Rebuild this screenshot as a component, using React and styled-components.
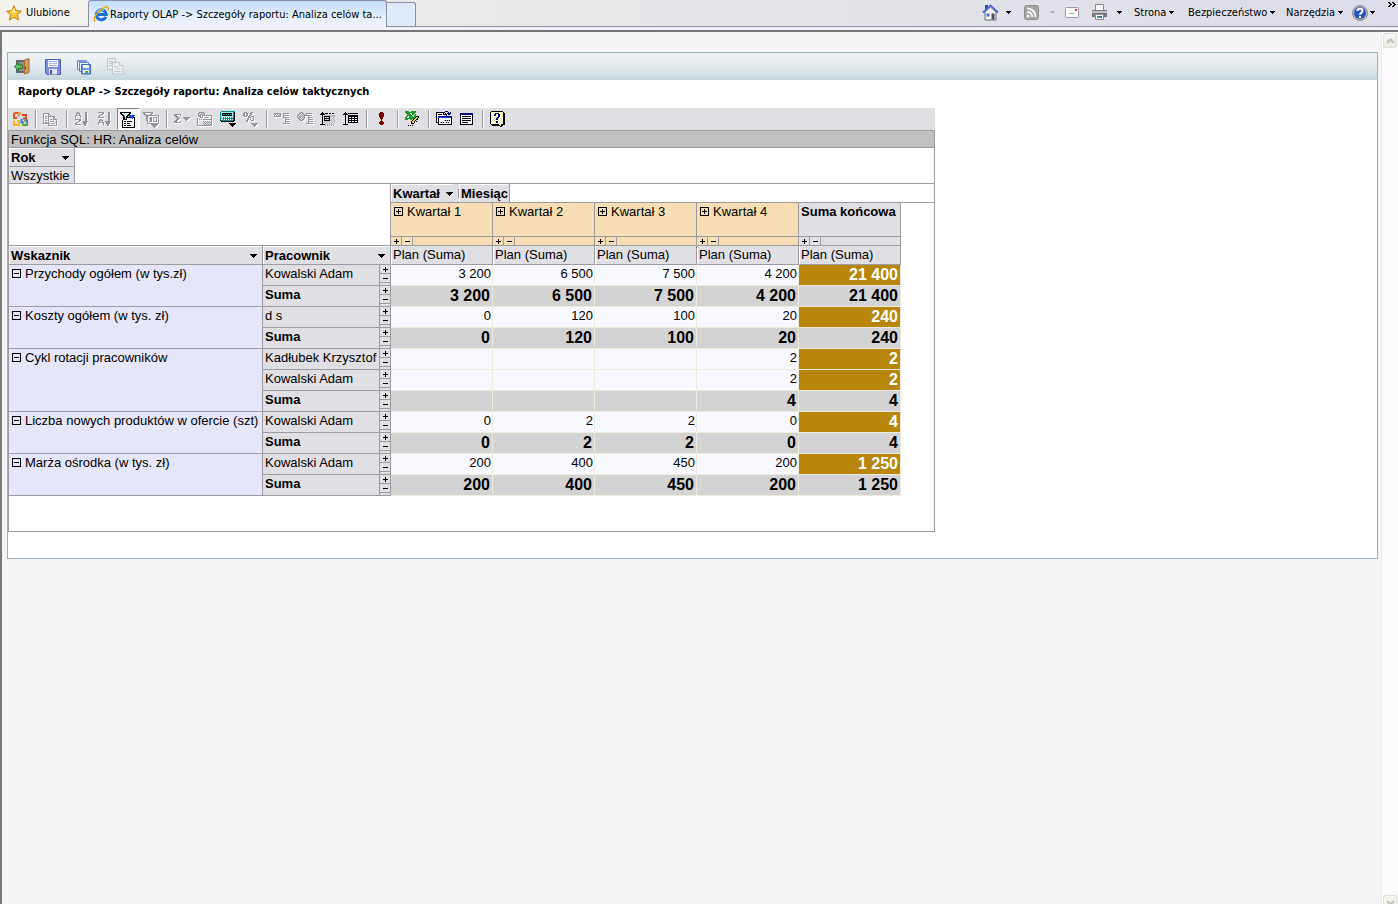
import React from "react";
import styled, { createGlobalStyle, css } from "styled-components";

const chromeFont = `Tahoma, "DejaVu Sans Condensed", "Noto Sans", sans-serif`;
const gridFont = `"Liberation Sans", Arial, sans-serif`;
const line = "#9c9ba1";
const face = "#e0dfe3";

const GlobalStyle = createGlobalStyle`
  * { box-sizing: border-box; }
  body { margin: 0; font-family: ${gridFont}; font-size: 13px; color: #000; background: #f4f4f4; }
  button { font: inherit; color: inherit; background: none; border: 0; padding: 0; margin: 0; }
  svg { display: block; flex: none; }
`;

/* ---------- icons ---------- */

const palette = {
  k: "#000000", g: "#94949c", w: "#ffffff", n: "#00007b", b: "#1c3cf0", c: "#9fe8ee",
  t: "#0b8f93", r: "#7b0000", e: "#1c9a2c", y: "#f0d820", l: "#fdf6b4", a: "#b4b4ba",
};

const toPath = (cells) => cells.map(([x, y]) => `M${x} ${y}h1v1h-1z`).join("");

function Pixels({ rows, disabled }) {
  const byColour = {};
  rows.forEach((row, y) =>
    [...row].forEach((ch, x) => {
      if (palette[ch]) (byColour[ch] = byColour[ch] || []).push([x, y]);
    })
  );
  return (
    <svg width="17" height="17" viewBox="0 0 17 17" shapeRendering="crispEdges" aria-hidden="true">
      {disabled && byColour.g && <path d={toPath(byColour.g)} fill="#fff" transform="translate(1 1)" />}
      {Object.entries(byColour).map(([ch, cells]) => (
        <path key={ch} d={toPath(cells)} fill={palette[ch]} />
      ))}
    </svg>
  );
}

const art = {
  copy: [
    "", "", "gggggg", "g....gg", "g....g.g", "g.gg.ggggggg", "g....g....gg", "g.gg.g....g.g",
    "g....g.gg.gggg", "g.gg.g.......g", "g....g.gggg..g", "g.gg.g.......g", "ggggggg.gggg.g",
    ".....g.......g", ".....ggggggggg",
  ],
  az: [
    "", "...gg......gg", "..gggg.....gg", "..g..g.....gg", ".gggggg....gg", ".g....g....gg", ".g....g....gg",
    "...........gg", ".gggggg....gg", ".....gg....gg", "....gg..gggggg", "..gg.....gggg", ".gg......gggg",
    ".gggggg...gg", "..........gg",
  ],
  za: [
    "", ".gggggg....gg", ".....gg....gg", "....gg.....gg", "..gg.......gg", ".gg........gg", ".gggggg....gg",
    "...........gg", "...gg......gg", "..gggg.....gg", "..g..g..gggggg", ".gggggg..gggg", ".g....g..gggg",
    ".g....g...gg", "..........gg",
  ],
  filter: [
    "", "kkkkkkkkkkk", "kkcwcwcwwkk", ".kkcwcwckk", "..kkcwckkbbbbbb", "...kkwkk.bbbbb.", "...kkckkkkkbbkk",
    "...kkckwwwwwbwk", "...kkkkwwwwwwwk", "..kwwwwwwwwwwwk", "..kwkkwkkkkkwwk", "..kwwwwwwwwwwwk",
    "..kwkkwkkkwwwwk", "..kwwwwwwwwwwwk", "..kwkkwkkkkwwwk", "..kwwwwwwwwwwwk", "..kkkkkkkkkkkkk",
  ],
  top: [
    "", "gggggggggg", "gg......gg", ".gg....gg", "..gggggggggggggg", "...gg..........g", "...gg..gg.gggg.g",
    "...gg.ggg.g..g.g", "...gg..gg.g..g.g", "...gg..gg.g..g.g", "....g.ggg.gggg.g", "....g..........g",
    "....gggggggggggg", "........ggggggg", ".........ggggg", "..........ggg", "...........g",
  ],
  sigma: [
    "", "", "", "ggggggg", "ggg...g", ".ggg", "..ggg....ggggggg", "...ggg....ggggg", "..ggg......ggg",
    ".ggg........g", "ggg...g", "ggggggg",
  ],
  subtotal: [
    "", "..ggggg", ".gg.g.gg", ".g.ggg.g", ".ggg.gggggggggg", "..gg.g........g", "...ggg.ggggg..g",
    "g.............g", "g.g.g.ggggggggg", "g.............g", "g.....g.g.g.g.g", "g......g.g.g.gg",
    "g.....g.g.g.g.g", "g......g.g.g.gg", "ggggggggggggggg",
  ],
  calc: [
    ".tttttttttttttt", "tcccccccccccctk", "tckkkkkkkkkkctk", "tckttktktkttctk", "tckkkkkkkkkkctk",
    "tcccccccccccctk", "tcwtwtwtwtwtctk", "tctttttttttttkk", "tcwtwtwtwtwtctk", "kttttttttttttkk",
    ".kkkkkkkkkkkkk", "", ".........kkkkkkk", "..........kkkkk", "...........kkk", "............k",
  ],
  percent: [
    "", ".ggg....gg", "gg.gg..gg", "gg.gg..gg", "gg.gg.gg", ".ggg.gg.ggg", ".....ggg..g", "....gg.g..g",
    "....gg.g..g", "...gg...ggg", "...gg", "", "........ggggggg", ".........ggggg", "..........ggg", "...........g",
  ],
  expand: [
    "", "", "ggggggg..gggggg", "gg.g.gg..g", "g.g.g.g..gggggg", "ggggggg..g", ".........gggggg", "...........g",
    "...........ggggg", "...........g", "...........ggggg", "...........g", ".........ggggggg",
  ],
  collapse: [
    "", "...ggg", "..gg.gg..gggggg", ".gg.g.gg.g", "gg.g.g.gggggggg", "g.ggg.gg...g", "gg.g.g.g...ggggg",
    ".gg.g.gg...g", "..gg.gg....ggggg", "...ggg.....g", "...........ggggg", "...........g", ".........ggggggg",
  ],
  rowArea: [
    "", "..k", ".kkk.kkk.kk.kk", "kkkkk", "..k..aaaaaaaaaa", "..k.kkkkkka.a.a", "..k.k.a.ak.a.a.", "..k.kkkkkka.a.a",
    "..k.k.a.ak.a.a.", "..k.kkkkkka.a.a", "..k..a.a.a.a.a.", "..k.a.a.a.a.a.a", "..k..a.a.a.a.a.",
    "kkkkka.a.a.a.a.", ".....a.a.a.a.a.",
  ],
  dataArea: [
    "", "..k", ".kkk.kkkkkkkkkk", "kkkkk", "..k..kkkkkkkkkk", "..k..kkkkkkkkkk", "..k..kwwkwwkwwk", "..k..kkkkkkkkkk",
    "..k..kwwkwwkwwk", "..k..kkkkkkkkkk", "..k..kwwkwwkwwk", "..k..kkkkkkkkkk", "..k", "kkkkk",
  ],
  bang: [
    "", "......rrr", ".....rrrrr", ".....rrrrr", ".....rrrrr", ".....rrrrr", "......rrr", "......rrr", ".......r",
    ".......r", "......rrr", ".....rrrrr", ".....rrrrr", "......rrr",
  ],
  excel: [
    "eeee..eeeee", "eeeeeeeeeee", ".eeeewweee", "..eeeewee.e", "..eeeee..ee", ".eeweeee.eekkk", "eewweeeeeekyyk", "eeeeeeeeekyyk",
    "eee..ee.kyykk", ".......kyyk", "......kyyk.k", "......kyyk", "......kkk", "", "...k.k.k",
  ],
  report: [
    ".........nnn", "kkkkkkkkk...n.n", "kwwwwwwkwk.nnnn", "kwkkkkwkkkk.nn", "kwwwwwwwwwk", "kwnnnnnnnnnnnnnn",
    "kwbbbbbbbbbbbbbn", "kwkwwwwwwwwwwwwk", "kwkwwwwwwwwwwwwk", "kwkwwwwwakakakwk", "kwkwwwwwwwwwwwwk", "kkkwakakwakakwwk",
    "..kwwwwwwwwwwwwk", "..kkkkkkkkkkkkkk",
  ],
  window: [
    "", "", ".nnnnnnnnnnnnn", ".nnnnnnnnnnnnn", ".kwwwwwwwwwwwk", ".kwkkkkkkkkkwk", ".kwwwwwwwwwwwk", ".kwkkkkkkkkkwk",
    ".kwwwwwwwwwwwk", ".kwkkkkkkkkkwk", ".kwwwwwwwwwwwk", ".kwkkkkkkwwwwk", ".kwwwwwwwwwwwk", ".kkkkkkkkkkkkk",
  ],
  help: [
    ".kkkkkkkkkkkk", "kwlwlwlwlwlwlk", "klwlwnnnnwlwlkk", "kwlwnnllnnlwlkk", "klwlnnwlnnwlwkk", "kwlwlwlwnnlwlkk",
    "klwlwlwnnlwlwkk", "kwlwlwnnlwlwlkk", "klwlwlnnwlwlwkk", "kwlwlwlwlwlwlkk", "klwlwlnnwlwlwkk", "kwlwlwnnlwlwlkk",
    "klwlwlwlwlwlwkk", ".kkkkkkkkwlkkkk", "..kkkkkkkklkk", "..........kk",
  ],
};

const OfficeIcon = () => (
  <svg width="17" height="17" viewBox="0 0 17 17" fill="none" strokeWidth="2" aria-hidden="true">
    <path d="M7 2H3.500C2.500 2 2 2.500 2 3.500V7h3" stroke="#e4572c" />
    <path d="M6.500 5.500V2.500H9" stroke="#f09038" />
    <path d="M10 4h4v3.500h-3" stroke="#d8452a" />
    <path d="M2 9.500V14h5v-4H5" stroke="#f2b61e" />
    <path d="M9.500 8v3.500H12" stroke="#3d78d8" />
    <path d="M12 9.500h3V14h-5" stroke="#5aa63a" />
    <path d="M14.500 8.500v3" stroke="#3d78d8" />
  </svg>
);

const StarIcon = () => (
  <svg width="16" height="16" viewBox="0 0 16 16" aria-hidden="true">
    <path d="M8 .8l2.100 4.900 5.300.5-4 3.500 1.200 5.300L8 12.200 3.400 15l1.200-5.300-4-3.500 5.300-.5z" fill="#ffc830" stroke="#c07a14" strokeWidth="1" />
    <path d="M8 3l1.300 3.500 3 .4L8 8 5 7z" fill="#fff0a0" />
  </svg>
);

const BrowserIcon = () => (
  <svg width="16" height="17" viewBox="0 0 16 17" fill="none" aria-hidden="true">
    <path d="M12.800 11A5 5 0 1 1 13.300 8.500H5" stroke="#1f6fd0" strokeWidth="3" />
    <path d="M4 6a5 5 0 0 1 7-1.600" stroke="#7cd0fa" strokeWidth="1.500" />
    <path d="M2.500 15.500C-1 14 3 7 8 3.500c3.500-2.500 7-3.500 7.300-1.500.1.800-.3 1.600-.8 2.500" stroke="#f0a818" strokeWidth="1.500" />
  </svg>
);

const HomeIcon = () => (
  <svg width="17" height="17" viewBox="0 0 17 17" aria-hidden="true">
    <path d="M3 8v8h11V8L8.500 3z" fill="#f4f4f0" stroke="#6a6a72" />
    <path d="M3 1h3v4H3z" fill="#2a44c0" />
    <path d="M1 8.500L8.500 1.500 16 8.500" fill="none" stroke="#4a6cc8" strokeWidth="2" />
    <path d="M4.500 9.500h3v3h-3z" fill="#3d6fd0" />
    <path d="M9.500 9.500h3v6h-3z" fill="#4a4a58" />
  </svg>
);

const FeedIcon = () => (
  <svg width="15" height="15" viewBox="0 0 15 15" aria-hidden="true">
    <rect x=".5" y=".5" width="14" height="14" rx="2" fill="#a4a4a4" stroke="#8e8e8e" />
    <g fill="none" stroke="#f4f4f4" strokeWidth="2">
      <path d="M3 3.500a8 8 0 0 1 8.500 8.500M3 7a4.500 4.500 0 0 1 5 5" />
    </g>
    <circle cx="4" cy="11" r="1.500" fill="#f4f4f4" />
  </svg>
);

const MailIcon = () => (
  <svg width="14" height="11" viewBox="0 0 14 11" aria-hidden="true">
    <rect x=".5" y=".5" width="13" height="10" rx="1" fill="#fbfbfb" stroke="#9c9ca4" />
    <path d="M10 2h2v2h-2z" fill="#e03030" />
    <path d="M4 6.500h5" stroke="#a8a8b0" />
  </svg>
);

const PrinterIcon = () => (
  <svg width="17" height="17" viewBox="0 0 17 17" aria-hidden="true">
    <path d="M4.500.5h8V7h-8z" fill="#fff" stroke="#888" />
    <path d="M1 6h15v7H1z" fill="#77777b" />
    <path d="M1 7h15v2H1z" fill="#c0c0c4" />
    <path d="M4.500 10.500h8v5h-8z" fill="#fff" stroke="#888" />
    <path d="M6 12h2v2H6z" fill="#3a9a4a" />
    <path d="M8 12h3v2H8z" fill="#2f6fd8" />
  </svg>
);

const HelpIcon = () => (
  <svg width="16" height="16" viewBox="0 0 16 16" aria-hidden="true">
    <circle cx="8" cy="8" r="7.500" fill="#b8b8bc" stroke="#88888e" />
    <circle cx="8" cy="8" r="6" fill="#2450c4" />
    <path d="M5.500 6c0-3.200 5-3 5-.2C10.500 8 8 7.800 8 9.800" fill="none" stroke="#fff" strokeWidth="2" />
    <path d="M7 11h2v2H7z" fill="#fff" />
  </svg>
);

const MoreIcon = () => (
  <svg width="8" height="5" viewBox="0 0 8 5" shapeRendering="crispEdges" aria-hidden="true">
    <path d="M0 0h2v1h1v1h1v1h-1v1h-1v1h-2v-1h1v-1h1v-1h-1v-1h-1zM4 0h2v1h1v1h1v1h-1v1h-1v1h-2v-1h1v-1h1v-1h-1v-1h-1z" />
  </svg>
);

const DoorIcon = () => (
  <svg width="17" height="17" viewBox="0 0 17 17" aria-hidden="true">
    <path d="M2 2h10v13H2z" fill="#686868" />
    <path d="M3 4h7v9H3z" fill="#8f8f87" />
    <path d="M10.500 2l4.500-1.500v14L10.500 16z" fill="#d89a58" stroke="#a46a34" />
    <path d="M11 9h1v2h-1z" fill="#6b4220" />
    <path d="M.5 8.500l4-4V7h4v3.500h-4V13z" fill="#5cba60" stroke="#237a34" />
  </svg>
);

const SaveIcon = () => (
  <svg width="16" height="16" viewBox="0 0 16 16" aria-hidden="true">
    <path d="M.5.5h15v15H2L.5 14z" fill="#7d8fe0" stroke="#4a5cb4" />
    <path d="M3 1h10v7H3z" fill="#f2f4fb" />
    <path d="M4 2.500h8M4 4.500h8M4 6.500h8" stroke="#aab4d8" />
    <path d="M4 10h8v5.500H4z" fill="#dfe3f2" />
    <path d="M5 11h2v4H5z" fill="#4257ac" />
  </svg>
);

const SaveAllIcon = () => (
  <svg width="16" height="16" viewBox="0 0 16 16" aria-hidden="true">
    <path d="M1.500 1.500h9v9h-9z" fill="#eef4fc" stroke="#5c86cc" />
    <path d="M1 1h10v2H1z" fill="#7da0dc" />
    <path d="M3.500 3.500h9v9h-9z" fill="#eef4fc" stroke="#5c86cc" />
    <path d="M5.500 5.500h9v9.500h-9z" fill="#6f9be0" stroke="#3b68b4" />
    <path d="M7 6h6v3H7z" fill="#f4f8ff" />
    <path d="M7 11h6v3H7z" fill="#f4f4d8" />
    <path d="M9 12h3v2H9z" fill="#58a858" />
  </svg>
);

const CopyPagesIcon = () => (
  <svg width="17" height="17" viewBox="0 0 17 17" fill="#e9edf0" stroke="#c2c7cc" aria-hidden="true">
    <path d="M.5.500h8v11h-8z" />
    <path d="M2 3.500h4M2 5.500h4M2 7.500h4" />
    <path d="M5.500 4.500h7l3.500 3v8.500H5.500z" />
    <path d="M12.500 4.500v3H16M7.500 8.500h3M7.500 13.500h6M9 11h4" />
  </svg>
);

const ArrowSvg = styled.svg`
  fill: ${(p) => p.$colour || "#000"};
`;
const Arrow = ({ small, colour }) =>
  small ? (
    <ArrowSvg $colour={colour} width="5" height="3" viewBox="0 0 5 3" shapeRendering="crispEdges" aria-hidden="true">
      <path d="M0 0h5v1h-1v1h-1v1h-1v-1h-1v-1h-1z" />
    </ArrowSvg>
  ) : (
    <ArrowSvg $colour={colour} width="7" height="4" viewBox="0 0 7 4" shapeRendering="crispEdges" aria-hidden="true">
      <path d="M0 0h7v1h-1v1h-1v1h-1v1h-1v-1h-1v-1h-1v-1h-1z" />
    </ArrowSvg>
  );

const BoxSign = ({ plus }) => (
  <svg width="9" height="9" viewBox="0 0 9 9" shapeRendering="crispEdges" aria-hidden="true">
    <path d={`M0 0h9v9h-9zM1 1v7h7v-7z`} fillRule="evenodd" />
    <path d={plus ? "M2 4h5v1h-5zM4 2h1v5h-1z" : "M2 4h5v1h-5z"} />
  </svg>
);

const Sign = ({ plus }) => (
  <svg width="5" height="5" viewBox="0 0 5 5" shapeRendering="crispEdges" aria-hidden="true">
    <path d={plus ? "M0 2h5v1h-5zM2 0h1v5h-1z" : "M0 2h5v1h-5z"} />
  </svg>
);

/* ---------- browser chrome ---------- */

const Window = styled.div`
  display: flex;
  flex-direction: column;
  height: 100vh;
  overflow: hidden;
`;

const BrowserBar = styled.header`
  display: flex;
  flex: none;
  height: 27px;
  font: 11px/14px ${chromeFont};
  background: linear-gradient(90deg, #f2f1ea, #e6e6ea 50%, #dcdce8);
  border-bottom: 1px solid #8c8fa6;
`;

const BarEdge = styled.div`
  flex: none;
  height: 5px;
  background: #f1f2f9;
  border-bottom: 2px solid #77777a;
`;

const Favourites = styled.button`
  display: flex;
  align-items: center;
  gap: 4px;
  width: 88px;
  padding: 0 0 0 6px;
`;

const Tab = styled.button`
  display: flex;
  align-items: center;
  gap: 1px;
  width: 299px;
  height: 27px;
  padding: 1px 5px 0 4px;
  white-space: nowrap;
  background: linear-gradient(#c3dcfb, #e4effd 60%, #f1f2f9);
  border: 1px solid #8c8fa6;
  border-bottom: 0;
  border-radius: 3px 3px 0 0;
`;

const NewTab = styled.button`
  width: 29px;
  height: 24px;
  margin-top: 2px;
  background: #dfebf9;
  border: 1px solid #8c8fa6;
  border-left: 0;
  border-bottom: 0;
  border-radius: 0 3px 0 0;
`;

const Commands = styled.nav`
  display: flex;
  margin-left: auto;
`;

const Command = styled.button`
  display: flex;
  align-items: center;
  gap: ${(p) => p.$gap || 3}px;
  width: ${(p) => p.$width}px;
  padding-bottom: 1px;
  white-space: nowrap;
`;

const More = styled.button`
  display: flex;
  align-self: flex-start;
  width: 12px;
  padding: 2px 0 0 2px;
`;

const Viewport = styled.div`
  display: flex;
  flex: 1;
  min-height: 0;
  border-left: 2px solid #77777a;
  background: #f4f4f4;
`;

const Page = styled.main`
  flex: 1;
  min-width: 0;
  padding: 20px 3px 0 5px;
`;

const Scroll = styled.div`
  display: flex;
  flex-direction: column;
  justify-content: space-between;
  flex: none;
  width: 17px;
  height: calc(100% + 7px);
  padding: 1px;
  background: #fbfbfd;
  border-left: 1px solid #ececec;
`;

const ScrollButton = styled.button`
  display: flex;
  align-items: center;
  justify-content: center;
  height: 15px;
  background: linear-gradient(#f7f7f4, #e9e9e0);
  border: 1px solid #e2e2d8;
  border-radius: 2px;
`;

const Chevron = ({ down }) => (
  <svg width="9" height="6" viewBox="0 0 9 6" fill="none" stroke="#c3c3bd" strokeWidth="2" aria-hidden="true">
    <path d={down ? "M1 1l3.500 3.500L8 1" : "M1 5l3.500-3.500L8 5"} />
  </svg>
);

/* ---------- report panel ---------- */

const Panel = styled.section`
  padding-bottom: 26px;
  background: #fff;
  border: 1px solid #9cb2bf;
`;

const PanelTools = styled.div`
  display: flex;
  align-items: center;
  height: 27px;
  padding-left: 6px;
  background: linear-gradient(#eff3f4, #e3eaed 50%, #c6d6dc);
`;

const PanelTool = styled.button`
  width: 31px;
`;

const Title = styled.h1`
  margin: 0;
  height: 28px;
  padding: 5px 10px 0;
  font: bold 11px/14px ${chromeFont};
`;

const Pivot = styled.div`
  width: fit-content;
`;

const PivotTools = styled.div`
  display: flex;
  align-items: stretch;
  height: 22px;
  padding-left: 1px;
  background: ${face};
`;

const PivotTool = styled.button`
  display: flex;
  align-items: center;
  justify-content: center;
  width: 23px;
  ${(p) =>
    p.$pressed &&
    css`
      background: #f3f3f5;
      border: 1px solid;
      border-color: #85848a #fff #fff #85848a;
    `}
`;

const Divider = styled.span`
  width: 2px;
  margin: 2px 3px;
  background: #9c9ba1;
  border-right: 1px solid #fff;
`;

const PivotFrame = styled.div`
  padding-bottom: 35px;
  border: 1px solid ${line};
`;

const PivotCaption = styled.div`
  height: 17px;
  padding-left: 2px;
  line-height: 17px;
  background: #c0c0c0;
  border-bottom: 1px solid ${line};
`;

const FilterArea = styled.div`
  display: flex;
  border-bottom: 1px solid ${line};
`;

const Filter = styled.div`
  width: 66px;
  border-right: 1px solid ${line};
  background: ${face};
`;

const FilterValue = styled.div`
  height: 16px;
  padding-left: 2px;
  line-height: 17px;
`;

const Field = styled.button`
  display: flex;
  align-items: center;
  justify-content: space-between;
  gap: 6px;
  width: ${(p) => (p.$inline ? "auto" : "100%")};
  height: 18px;
  padding: 0 ${(p) => (p.$inline ? 0 : 5)}px 0 1px;
  font-weight: bold;
  line-height: 17px;
  background: ${face};
  border: 1px solid #fff;
  border-width: 1px 0 0 1px;
`;

const FilterField = styled(Field)`
  height: 19px;
  border-bottom: 1px solid ${line};
`;

const Grid = styled.table`
  table-layout: fixed;
  width: 925px;
  border-collapse: separate;
  border-spacing: 0;
  line-height: 17px;
`;

const cell = css`
  padding: 0;
  vertical-align: top;
  text-align: left;
  font-weight: normal;
  border: 0 solid ${line};
  border-width: 0 1px 1px 0;
`;

const Blank = styled.td`
  ${cell}
`;

const Rest = styled.td`
  padding: 0;
`;

const FieldsCell = styled.td`
  ${cell}
  border-right: 0;
`;

const Fields = styled.div`
  display: flex;
  align-items: center;
  width: fit-content;
  height: 18px;
  padding-right: 1px;
  background: ${face};
  border-right: 1px solid ${line};
`;

const FieldSplit = styled.span`
  width: 1px;
  height: 9px;
  margin: 0 0 0 5px;
  background: ${line};
`;

const Head = styled.th`
  ${cell}
  height: 34px;
  background: ${(p) => (p.$total ? face : "#f5deb3")};
`;

const Member = styled.span`
  display: flex;
  align-items: center;
  gap: 4px;
  padding-left: 3px;
  white-space: nowrap;
`;

const TotalLabel = styled.span`
  display: block;
  padding-left: 2px;
  font-weight: bold;
  white-space: nowrap;
`;

const SignsCell = styled.td`
  ${cell}
  height: 9px;
  line-height: 0;
  background: ${(p) => (p.$total ? face : "#f5deb3")};
`;

const SignsRow = styled.div`
  display: flex;
`;

const SignButton = styled.button`
  display: flex;
  align-items: center;
  justify-content: center;
  height: 8px;
  width: 11px;
  border-right: 1px solid ${line};
`;

const FieldHead = styled.th`
  ${cell}
  height: 19px;
`;

const Measure = styled.th`
  ${cell}
  height: 19px;
  padding-left: 1px;
  background: ${face};
  border-left: 1px solid #fff;
`;

const Indicator = styled.th`
  ${cell}
  background: #e6e6fa;
`;

const Person = styled.th`
  ${cell}
  height: 21px;
  padding-left: 2px;
  white-space: nowrap;
  background: ${face};
  font-weight: ${(p) => (p.$sum ? "bold" : "normal")};
`;

const SideSigns = styled.td`
  ${cell}
  background: ${face};
`;

const SideButton = styled.button`
  display: flex;
  align-items: center;
  justify-content: center;
  width: 10px;
  height: 9px;
  border-bottom: 1px solid ${line};
`;

const Value = styled.td`
  ${cell}
  height: 21px;
  padding-right: 1px;
  text-align: right;
  background: #f8f8ff;
  border-color: #eeebdd;
  ${(p) => (p.$sum || p.$total) && css`
    padding-right: 2px;
    font-size: 16px;
    line-height: 20px;
    font-weight: bold;
    background: #d3d3d3;
  `}
  ${(p) => p.$total && !p.$sum && css`
    color: #fff;
    background: #b8860b;
  `}
`;

/* ---------- data ---------- */

const tools = [
  ["Office", "office"], null, ["Kopiuj", "copy", 1], null,
  ["Sortuj rosnąco", "az", 1], ["Sortuj malejąco", "za", 1], ["Autofiltr", "filter"], ["Pokaż pierwsze", "top", 1], null,
  ["Autoobliczanie", "sigma", 1], ["Suma częściowa", "subtotal", 1], ["Obliczenia", "calc"], ["Pokaż jako", "percent", 1], null,
  ["Zwiń", "expand", 1], ["Rozwiń", "collapse", 1], ["Obszar wierszy", "rowArea"], ["Obszar danych", "dataArea"], null,
  ["Odśwież", "bang"], null, ["Eksportuj", "excel"], null,
  ["Polecenia i opcje", "report"], ["Lista pól", "window"], null, ["Pomoc", "help"],
];

const quarters = ["Kwartał 1", "Kwartał 2", "Kwartał 3", "Kwartał 4"];

const groups = [
  { name: "Przychody ogółem (w tys.zł)", rows: [
    ["Kowalski Adam", "3 200", "6 500", "7 500", "4 200", "21 400"],
    ["Suma", "3 200", "6 500", "7 500", "4 200", "21 400"],
  ] },
  { name: "Koszty ogółem (w tys. zł)", rows: [
    ["d s", "0", "120", "100", "20", "240"],
    ["Suma", "0", "120", "100", "20", "240"],
  ] },
  { name: "Cykl rotacji pracowników", rows: [
    ["Kadłubek Krzysztof", "", "", "", "2", "2"],
    ["Kowalski Adam", "", "", "", "2", "2"],
    ["Suma", "", "", "", "4", "4"],
  ] },
  { name: "Liczba nowych produktów w ofercie (szt)", rows: [
    ["Kowalski Adam", "0", "2", "2", "0", "4"],
    ["Suma", "0", "2", "2", "0", "4"],
  ] },
  { name: "Marża ośrodka (w tys. zł)", rows: [
    ["Kowalski Adam", "200", "400", "450", "200", "1 250"],
    ["Suma", "200", "400", "450", "200", "1 250"],
  ] },
];

const ColumnSigns = ({ total }) => (
  <SignsCell $total={total}>
    <SignsRow>
      <SignButton aria-label="Rozwiń"><Sign plus /></SignButton>
      <SignButton aria-label="Zwiń"><Sign /></SignButton>
    </SignsRow>
  </SignsCell>
);

const PivotGrid = () => (
  <Grid>
    <colgroup>
      <col width="254" /><col width="117" /><col width="11" />
      <col width="102" /><col width="102" /><col width="102" /><col width="102" /><col width="102" />
      <col />
    </colgroup>
    <thead>
      <tr>
        <Blank colSpan={3} rowSpan={3} />
        <FieldsCell colSpan={6}>
          <Fields>
            <Field $inline>Kwartał <Arrow /></Field>
            <FieldSplit />
            <Field $inline>Miesiąc</Field>
          </Fields>
        </FieldsCell>
      </tr>
      <tr>
        {quarters.map((q) => (
          <Head key={q}><Member><BoxSign plus />{q}</Member></Head>
        ))}
        <Head $total><TotalLabel>Suma końcowa</TotalLabel></Head>
        <Rest />
      </tr>
      <tr>
        {quarters.map((q) => <ColumnSigns key={q} />)}
        <ColumnSigns total />
        <Rest />
      </tr>
      <tr>
        <FieldHead><Field>Wskaznik <Arrow /></Field></FieldHead>
        <FieldHead colSpan={2}><Field>Pracownik <Arrow /></Field></FieldHead>
        {[...quarters, "total"].map((q) => <Measure key={q}>Plan (Suma)</Measure>)}
        <Rest />
      </tr>
    </thead>
    <tbody>
      {groups.map((group) =>
        group.rows.map(([person, ...values], i) => {
          const sum = person === "Suma";
          return (
            <tr key={group.name + i}>
              {i === 0 && (
                <Indicator rowSpan={group.rows.length}>
                  <Member><BoxSign />{group.name}</Member>
                </Indicator>
              )}
              <Person $sum={sum}>{person}</Person>
              <SideSigns>
                <SideButton aria-label="Rozwiń"><Sign plus /></SideButton>
                <SideButton aria-label="Zwiń"><Sign /></SideButton>
              </SideSigns>
              {values.map((v, n) => <Value key={n} $sum={sum} $total={n === 4}>{v}</Value>)}
              <Rest />
            </tr>
          );
        })
      )}
    </tbody>
  </Grid>
);

export default function App() {
  return (
    <Window>
      <GlobalStyle />
      <BrowserBar>
        <Favourites><StarIcon />Ulubione</Favourites>
        <Tab><BrowserIcon />Raporty OLAP -&gt; Szczegóły raportu: Analiza celów ta...</Tab>
        <NewTab aria-label="Nowa karta" />
        <Commands>
          <Command $width={42} $gap={7} aria-label="Strona główna"><HomeIcon /><Arrow small /></Command>
          <Command $width={41} $gap={11} aria-label="Kanały"><FeedIcon /><Arrow small colour="#b8b8b8" /></Command>
          <Command $width={26} aria-label="Poczta"><MailIcon /></Command>
          <Command $width={43} $gap={9} aria-label="Drukuj"><PrinterIcon /><Arrow small /></Command>
          <Command $width={54}>Strona<Arrow small /></Command>
          <Command $width={98}>Bezpieczeństwo<Arrow small /></Command>
          <Command $width={66}>Narzędzia<Arrow small /></Command>
          <Command $width={34} $gap={2} aria-label="Pomoc"><HelpIcon /><Arrow small /></Command>
          <More aria-label="Więcej"><MoreIcon /></More>
        </Commands>
      </BrowserBar>
      <BarEdge />
      <Viewport>
        <Page>
          <Panel>
            <PanelTools>
              <PanelTool aria-label="Wyjdź"><DoorIcon /></PanelTool>
              <PanelTool aria-label="Zapisz"><SaveIcon /></PanelTool>
              <PanelTool aria-label="Zapisz jako"><SaveAllIcon /></PanelTool>
              <PanelTool aria-label="Kopiuj"><CopyPagesIcon /></PanelTool>
            </PanelTools>
            <Title>Raporty OLAP -&gt; Szczegóły raportu: Analiza celów taktycznych</Title>
            <Pivot>
              <PivotTools>
                {tools.map((tool, i) =>
                  tool ? (
                    <PivotTool key={i} aria-label={tool[0]} disabled={!!tool[2]} $pressed={tool[1] === "filter"}>
                      {tool[1] === "office" ? <OfficeIcon /> : <Pixels rows={art[tool[1]]} disabled={!!tool[2]} />}
                    </PivotTool>
                  ) : (
                    <Divider key={i} />
                  )
                )}
              </PivotTools>
              <PivotFrame>
                <PivotCaption>Funkcja SQL: HR: Analiza celów</PivotCaption>
                <FilterArea>
                  <Filter>
                    <FilterField>Rok <Arrow /></FilterField>
                    <FilterValue>Wszystkie</FilterValue>
                  </Filter>
                </FilterArea>
                <PivotGrid />
              </PivotFrame>
            </Pivot>
          </Panel>
        </Page>
        <Scroll>
          <ScrollButton aria-label="W górę"><Chevron /></ScrollButton>
          <ScrollButton aria-label="W dół"><Chevron down /></ScrollButton>
        </Scroll>
      </Viewport>
    </Window>
  );
}
